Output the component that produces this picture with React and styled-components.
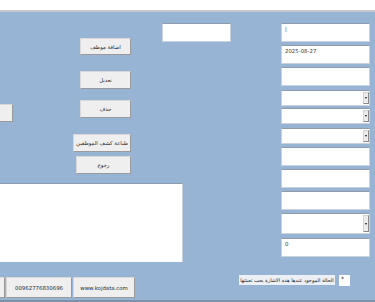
import React from "react";
import styled, { createGlobalStyle } from "styled-components";

const GlobalStyle = createGlobalStyle`
  html, body {
    margin: 0;
    padding: 0;
    background: #98b4d4;
  }
  body {
    font-family: "DejaVu Sans", "Liberation Sans", sans-serif;
    overflow: hidden;
  }
`;

const Page = styled.div`
  width: 375px;
  height: 302px;
  box-sizing: border-box;
  display: flex;
  flex-direction: column;
  overflow: hidden;
  background: #98b4d4;
  border-bottom: 2px solid #7d91a8;
`;

const TopStrip = styled.div`
  flex-shrink: 0;
  height: 10px;
  background: #ffffff;
  border-bottom: 2px solid #c2c6cc;
`;

const Upper = styled.div`
  display: flex;
  align-items: flex-start;
`;

const LeftCol = styled.div`
  display: flex;
  flex-direction: column;
  width: 231px;
  flex-shrink: 0;
`;

const TopArea = styled.div`
  display: flex;
  align-items: flex-start;
  height: 171px;
`;

const Button = styled.div`
  box-sizing: border-box;
  flex-shrink: 0;
  display: flex;
  align-items: center;
  justify-content: center;
  width: ${(p) => p.$w}px;
  height: ${(p) => p.$h || 18}px;
  margin-top: ${(p) => p.$mt || 0}px;
  background: #efefef;
  border: 1px solid #d8d8d8;
  border-right-color: #9a9a9a;
  border-bottom-color: #9a9a9a;
  color: #2a2a2a;
  font-size: 5.4px;
  white-space: nowrap;
  direction: rtl;
`;

const CutButton = styled(Button)`
  margin-left: -24px;
  justify-content: flex-end;
  padding-right: 9px;
`;

const ButtonCol = styled.div`
  display: flex;
  flex-direction: column;
  align-items: flex-end;
  width: 58px;
  margin-left: 60px;
`;

const TopField = styled.div`
  box-sizing: border-box;
  width: 69px;
  height: 19px;
  margin-top: 11px;
  margin-left: 31px;
  background: #ffffff;
  border: 1px solid #c9d2dc;
  border-top-color: #8f9bab;
`;

const ListBox = styled.div`
  box-sizing: border-box;
  width: 183px;
  height: 79px;
  background: #ffffff;
  border-top: 1px solid #8f9bab;
  border-right: 1px solid #c9d2dc;
`;

const RightCol = styled.div`
  display: flex;
  flex-direction: column;
  width: 89px;
  margin-left: 50px;
`;

const Field = styled.div`
  box-sizing: border-box;
  display: flex;
  align-items: flex-start;
  width: 89px;
  height: ${(p) => p.$h}px;
  margin-top: ${(p) => p.$mt}px;
  background: #ffffff;
  border: 1px solid #c9d2dc;
  border-top-color: #8f9bab;
`;

const FieldText = styled.span`
  flex: 1;
  padding: 2px 0 0 3px;
  font-size: 5.4px;
  line-height: 7px;
  color: #3a3a3a;
`;

const DropButton = styled.div`
  box-sizing: border-box;
  align-self: stretch;
  width: 6px;
  margin: 1px 0;
  display: flex;
  align-items: center;
  justify-content: center;
  background: #ececec;
  border: 1px solid #d0d0d0;
  border-right-color: #8a8a8a;
  border-bottom-color: #8a8a8a;

  &::after {
    content: "";
    border-left: 1.5px solid transparent;
    border-right: 1.5px solid transparent;
    border-top: 2px solid #111;
  }
`;

const Footer = styled.div`
  display: flex;
  align-items: flex-start;
  margin-top: 13px;
`;

const FooterButtons = styled.div`
  display: flex;
  gap: 1px;
  margin-top: 2px;
  margin-left: -40px;
`;

const Note = styled.div`
  display: flex;
  align-items: flex-start;
  margin-left: 104px;
  gap: 4px;
`;

const NoteLabel = styled.div`
  width: 96px;
  height: 10px;
  display: flex;
  align-items: center;
  justify-content: center;
  background: #eceff4;
  color: #222;
  font-size: 5px;
  white-space: nowrap;
  direction: rtl;
`;

const StarBox = styled.div`
  box-sizing: border-box;
  width: 11px;
  height: 11px;
  padding-left: 2px;
  background: #ffffff;
  color: #222;
  font-size: 6px;
  line-height: 8px;
`;

const fields = [
  { mt: 11, h: 19, text: "|" },
  { mt: 3, h: 19, text: "2025-08-27" },
  { mt: 3, h: 19 },
  { mt: 4, h: 16, combo: true },
  { mt: 2, h: 16, combo: true },
  { mt: 4, h: 16, combo: true },
  { mt: 3, h: 19 },
  { mt: 3, h: 19 },
  { mt: 3, h: 19 },
  { mt: 3, h: 21, combo: true },
  { mt: 4, h: 19, text: "0" },
];

export default function App() {
  return (
    <>
      <GlobalStyle />
      <Page>
        <TopStrip />
        <Upper>
          <LeftCol>
            <TopArea>
              <CutButton $w={37} $mt={92}>عرض</CutButton>
              <ButtonCol>
                <Button $w={51} $h={17} $mt={26}>اضافة موظف</Button>
                <Button $w={51} $mt={16}>تعديل</Button>
                <Button $w={51} $mt={11}>حذف</Button>
                <Button $w={58} $mt={16}>طباعة كشف الموظفين</Button>
                <Button $w={55} $mt={4}>رجوع</Button>
              </ButtonCol>
              <TopField />
            </TopArea>
            <ListBox />
          </LeftCol>
          <RightCol>
            {fields.map((f, i) => (
              <Field key={i} $mt={f.mt} $h={f.h}>
                <FieldText>{f.text || ""}</FieldText>
                {f.combo && <DropButton />}
              </Field>
            ))}
          </RightCol>
        </Upper>
        <Footer>
          <FooterButtons>
            <Button $w={45} $h={21} />
            <Button $w={66} $h={21}>00962776830696</Button>
            <Button $w={62} $h={21}>www.kojdata.com</Button>
          </FooterButtons>
          <Note>
            <NoteLabel>الحالة الموجود عندها هذه الاشارة يجب تعبئتها</NoteLabel>
            <StarBox>*</StarBox>
          </Note>
        </Footer>
      </Page>
    </>
  );
}
